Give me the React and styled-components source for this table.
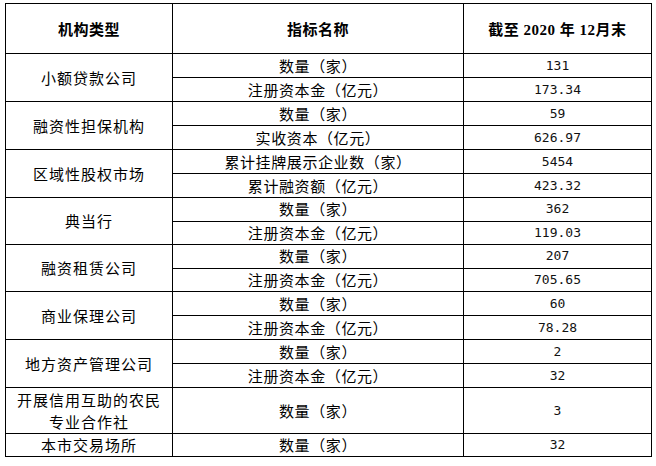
import React from "react";
import styled, { createGlobalStyle } from "styled-components";

const GlobalStyle = createGlobalStyle`
  body {
    margin: 0;
    background: #ffffff;
    font-family: "Noto Sans CJK SC", "Liberation Sans", sans-serif;
    color: #000;
  }
`;

const Page = styled.div`
  padding: 3px 0 0 5px;
`;

const Table = styled.table`
  border-collapse: collapse;
  table-layout: fixed;
  width: 646px;
`;

const Row = styled.tr`
  height: ${(p) => p.$h || 24}px;
`;

const HeadCell = styled.th`
  border: 1px solid #000;
  padding: 0;
  font-family: "Liberation Serif", "Noto Sans CJK SC", serif;
  font-weight: bold;
  font-size: 15px;
  letter-spacing: 0.5px;
  text-align: center;
  vertical-align: middle;
`;

const TypeCell = styled.td`
  border: 1px solid #000;
  padding: 0;
  font-size: 15px;
  letter-spacing: 1px;
  line-height: 22px;
  text-align: center;
  vertical-align: middle;
`;

const NameCell = styled.td`
  border: 1px solid #000;
  padding: 0;
  font-size: 15px;
  letter-spacing: 0.6px;
  line-height: 20px;
  text-align: center;
  vertical-align: middle;
`;

const ValueCell = styled.td`
  border: 1px solid #000;
  padding: 0;
  font-family: "DejaVu Sans Mono", "Liberation Mono", monospace;
  font-size: 13px;
  line-height: 20px;
  text-align: center;
  vertical-align: middle;
  color: #111;
`;

const groups = [
  {
    type: "小额贷款公司",
    items: [
      ["数量（家）", "131"],
      ["注册资本金（亿元）", "173.34"],
    ],
  },
  {
    type: "融资性担保机构",
    items: [
      ["数量（家）", "59"],
      ["实收资本（亿元）", "626.97"],
    ],
  },
  {
    type: "区域性股权市场",
    items: [
      ["累计挂牌展示企业数（家）", "5454"],
      ["累计融资额（亿元）", "423.32"],
    ],
  },
  {
    type: "典当行",
    h: 23.5,
    items: [
      ["数量（家）", "362"],
      ["注册资本金（亿元）", "119.03"],
    ],
  },
  {
    type: "融资租赁公司",
    h: 23.5,
    items: [
      ["数量（家）", "207"],
      ["注册资本金（亿元）", "705.65"],
    ],
  },
  {
    type: "商业保理公司",
    items: [
      ["数量（家）", "60"],
      ["注册资本金（亿元）", "78.28"],
    ],
  },
  {
    type: "地方资产管理公司",
    items: [
      ["数量（家）", "2"],
      ["注册资本金（亿元）", "32"],
    ],
  },
  {
    type: (
      <>
        开展信用互助的农民
        <br />
        专业合作社
      </>
    ),
    h: 46,
    items: [["数量（家）", "3"]],
  },
  {
    type: "本市交易场所",
    h: 23,
    items: [["数量（家）", "32"]],
  },
];

export default function App() {
  return (
    <Page>
      <GlobalStyle />
      <Table>
        <colgroup>
          <col style={{ width: 167 }} />
          <col style={{ width: 291 }} />
          <col style={{ width: 188 }} />
        </colgroup>
        <tbody>
          <Row $h={50}>
            <HeadCell>机构类型</HeadCell>
            <HeadCell>指标名称</HeadCell>
            <HeadCell>截至 2020 年 12月末</HeadCell>
          </Row>
          {groups.map((g, gi) =>
            g.items.map(([name, value], i) => (
              <Row key={`${gi}-${i}`} $h={g.h}>
                {i === 0 && (
                  <TypeCell rowSpan={g.items.length}>{g.type}</TypeCell>
                )}
                <NameCell>{name}</NameCell>
                <ValueCell>{value}</ValueCell>
              </Row>
            ))
          )}
        </tbody>
      </Table>
    </Page>
  );
}
